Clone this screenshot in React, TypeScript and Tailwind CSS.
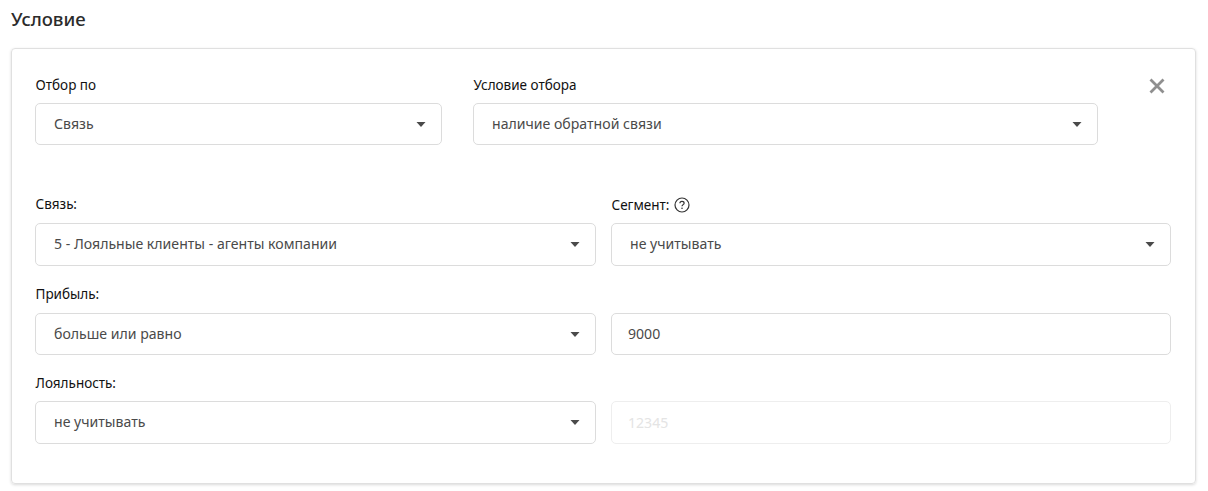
const font = "font-['Noto_Sans',sans-serif]"

function Caret() {
  return (
    <svg width="10" height="5" viewBox="0 0 10 5" className="flex-shrink-0">
      <path d="M0.5 0H9.5L5 5Z" fill="#4a4a4a" />
    </svg>
  )
}

function Select({ value, className = '' }: { value: string; className?: string }) {
  return (
    <div
      className={`flex items-center justify-between h-[42px] pl-[18px] pr-[15px] bg-white border border-[#dcdcdc] rounded-[5px] text-[14.1px] text-[#4a4a4a] ${className}`}
    >
      <span className="relative -top-[0.5px]">{value}</span>
      <Caret />
    </div>
  )
}

function Label({ children }: { children: React.ReactNode }) {
  return <div className="pl-[0.5px] text-[13.5px] leading-[18px] text-[#111]">{children}</div>
}

export default function App() {
  return (
    <div className={`${font} w-[1208px] h-[491px] bg-white pl-[11px] pr-[12px] overflow-hidden`}>
      <h2 className="h-[48px] pt-[7px] text-[18.5px] leading-[24px] font-medium text-[#2b2b2b]">Условие</h2>

      {/* Condition card */}
      <div className="h-[436px] border border-[#e0e0e0] rounded-[4px] shadow-[0_1px_3px_rgba(0,0,0,0.15)] pt-[27px] pl-[23px] pr-[24px]">
        <div className="flex items-start">
          <div className="w-[407px]">
            <Label>Отбор по</Label>
            <Select value="Связь" className="mt-[9px]" />
          </div>
          <div className="w-[625px] ml-[31px]">
            <Label>Условие отбора</Label>
            <Select value="наличие обратной связи" className="mt-[9px]" />
          </div>
          <button className="ml-[51px] mt-[2px]" aria-label="Удалить">
            <svg width="16" height="16" viewBox="0 0 16 16" className="block">
              <path d="M1.5 1.5L14.5 14.5M14.5 1.5L1.5 14.5" stroke="#8f8f8f" strokeWidth="2.8" fill="none" />
            </svg>
          </button>
        </div>

        <div className="grid grid-cols-[561px_560px] gap-x-[15px] mt-[50px]">
          <div>
            <Label>Связь:</Label>
            <Select value="5 - Лояльные клиенты - агенты компании" className="mt-[10px] h-[43px]" />
          </div>
          <div className="pt-[1px]">
            <div className="flex items-center gap-[5px]">
              <Label>Сегмент:</Label>
              <svg width="16" height="16" viewBox="0 0 16 16" fill="none">
                <circle cx="8" cy="8" r="7" stroke="#333" strokeWidth="1.2" />
                <path d="M5.9 6.3C5.9 5.1 6.9 4.4 8 4.4C9.1 4.4 10.1 5.1 10.1 6.2C10.1 7.6 8 7.7 8 9.3" stroke="#333" strokeWidth="1.2" />
                <circle cx="8" cy="11.3" r="0.8" fill="#333" />
              </svg>
            </div>
            <Select value="не учитывать" className="mt-[9px] h-[43px]" />
          </div>

          <div className="mt-[19px]">
            <Label>Прибыль:</Label>
            <Select value="больше или равно" className="mt-[10px]" />
          </div>
          <div className="mt-[47px] flex items-center h-[42px] pl-[16px] pb-[1px] border border-[#dcdcdc] rounded-[5px] text-[14.1px] text-[#4a4a4a]">
            9000
          </div>

          <div className="mt-[19px]">
            <Label>Лояльность:</Label>
            <Select value="не учитывать" className="mt-[9px] h-[43px]" />
          </div>
          <div className="mt-[46px] flex items-center h-[43px] pl-[16px] border border-[#eeeeee] rounded-[5px] text-[14.1px] text-[#e4e4e4]">
            12345
          </div>
        </div>
      </div>
    </div>
  )
}
